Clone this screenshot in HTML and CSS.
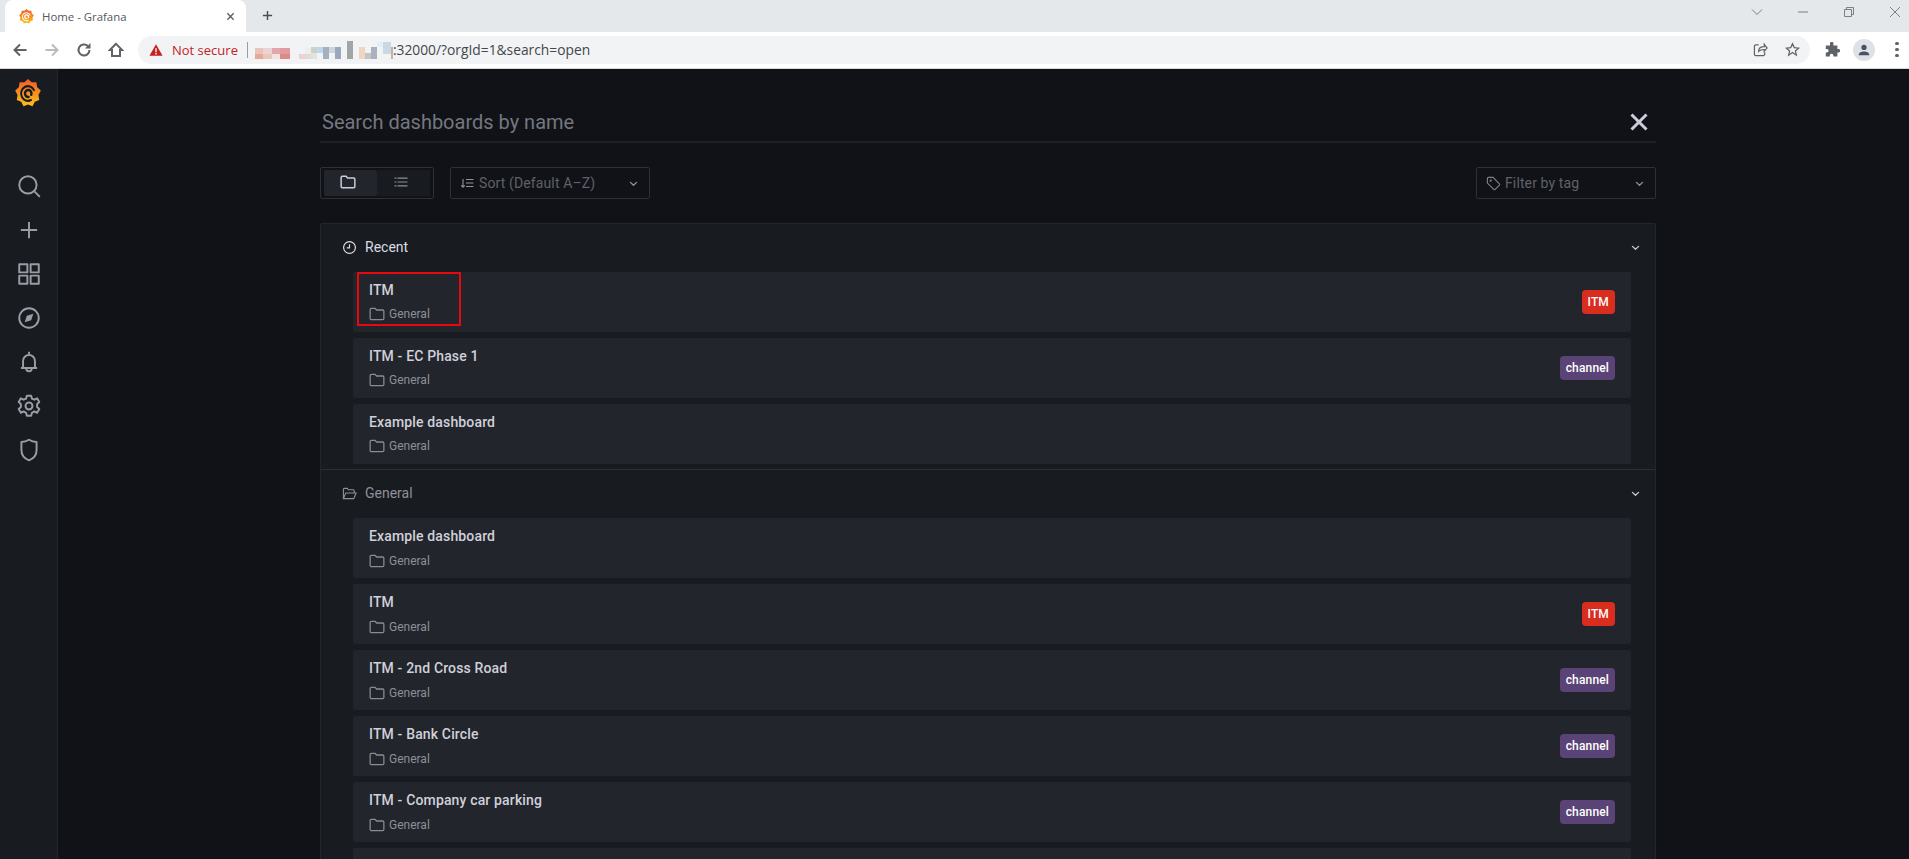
FILE: index.html
```html
<!DOCTYPE html>
<html lang="en">
<head>
<meta charset="utf-8">
<title>Home - Grafana</title>
<link rel="stylesheet" href="styles.css">
</head>
<body>
<svg class="defs" width="0" height="0" aria-hidden="true">
  <defs>
    <linearGradient id="gf" x1="0" y1="1" x2="0" y2="0">
      <stop offset="0" stop-color="#fcc21b"/>
      <stop offset="1" stop-color="#f05a28"/>
    </linearGradient>
    <symbol id="logo" viewBox="0 0 24 24" preserveAspectRatio="none">
      <path fill="url(#gf)" d="M12 0L15.350 2.790 19.710 2.810 20.490 7.100 23.820 9.920 21.650 13.700 22.390 18 18.300 19.510 16.100 23.280 12 21.800 7.900 23.280 5.700 19.510 1.610 18 2.350 13.700 .18 9.920 3.510 7.100 4.290 2.810 8.650 2.790z"/>
      <path fill="none" stroke="currentColor" stroke-width="1.800" stroke-linecap="round" d="M17.500 9.500A6.300 6.300 0 1 0 14.800 18"/>
      <path fill="none" stroke="currentColor" stroke-width="2.200" stroke-linecap="round" d="M15 13.500a3 3 0 1 0-2.500 1.900"/>
    </symbol>
    <symbol id="folder" viewBox="0 0 14 14">
      <path fill="none" stroke="currentColor" d="M1 3c0-.6.4-1 1-1h3.300l1.300 1.500H12c.6 0 1 .4 1 1v6.500c0 .6-.4 1-1 1H2c-.6 0-1-.4-1-1z"/>
    </symbol>
    <symbol id="chev" viewBox="0 0 10 6">
      <path fill="none" stroke="currentColor" stroke-width="1.500" stroke-linecap="round" stroke-linejoin="round" d="M1.600 1.200L5 4.400l3.400-3.200"/>
    </symbol>
  </defs>
</svg>

<header class="tabstrip">
  <div class="tab">
    <svg class="tab-logo"><use href="#logo"/></svg>
    <span class="tab-title">Home - Grafana</span>
    <svg class="tab-close" viewBox="0 0 10 10"><path d="M1.500 1.500l7 7m0-7l-7 7"/></svg>
  </div>
  <svg class="new-tab" viewBox="0 0 12 12"><path d="M6 1v10M1 6h10"/></svg>
  <div class="win-controls">
    <svg class="win-icon" viewBox="0 0 12 12"><path d="M1 3.500l5 5 5-5"/></svg>
    <svg class="win-icon" viewBox="0 0 12 12"><path d="M1 6h10"/></svg>
    <svg class="win-icon" viewBox="0 0 12 12"><path d="M1.500 3.500h7v7h-7zM3.500 3.500v-2h7v7h-2"/></svg>
    <svg class="win-icon" viewBox="0 0 12 12"><path d="M1 1l10 10M11 1L1 11"/></svg>
  </div>
</header>

<div class="toolbar">
  <svg class="nav-icon" viewBox="0 0 16 16"><path d="M14.500 8H3M8 2.500L2.500 8 8 13.500"/></svg>
  <svg class="nav-icon nav-off" viewBox="0 0 16 16"><path d="M1.500 8H13M8 2.500L13.500 8 8 13.500"/></svg>
  <svg class="nav-icon" viewBox="0 0 16 16"><path d="M13.500 8a5.500 5.500 0 1 1-1.700-4"/><path class="solid" d="M14.500 1v5.500H9z"/></svg>
  <svg class="nav-icon" viewBox="0 0 16 16"><path d="M8 1.800L1.800 8H4v6h8V8h2.200z"/></svg>
  <div class="omnibox">
    <svg class="warn" viewBox="0 0 16 16"><path d="M8 1.500L15.500 14.500H.5z"/><path class="warn-mark" d="M8 6v4.500M8 11.500v1.500"/></svg>
    <span class="not-secure">Not secure</span>
    <span class="sep"></span>
    <svg class="blur" viewBox="0 0 114 18" preserveAspectRatio="none" shape-rendering="crispEdges">
      <rect x="0" y="7" width="7" height="6" fill="#e8c4bc"/><rect x="0" y="13" width="7" height="5" fill="#e6a898"/>
      <rect x="7" y="7" width="7" height="6" fill="#ecd2d3"/><rect x="7" y="13" width="7" height="5" fill="#e8c8bc"/>
      <rect x="14" y="7" width="7" height="6" fill="#e2a5aa"/><rect x="14" y="13" width="7" height="5" fill="#f2e2e0"/><rect x="21" y="7" width="8" height="6" fill="#e09aa0"/><rect x="21" y="13" width="8" height="5" fill="#dc8a84"/>
      <rect x="36" y="13" width="5" height="5" fill="#ecd2d6"/><rect x="41" y="7" width="5" height="6" fill="#eeeeee"/><rect x="41" y="13" width="5" height="5" fill="#e5d8d6"/><rect x="46" y="6" width="5" height="6" fill="#c9d3c9"/><rect x="46" y="12" width="5" height="6" fill="#dfe5de"/><rect x="51" y="6" width="5" height="6" fill="#bcd7ef"/><rect x="56" y="6" width="5" height="12" fill="#a7afbd"/><rect x="61" y="6" width="5" height="6" fill="#ccd6e2"/><rect x="66" y="6" width="5" height="12" fill="#9aa7bc"/>
      <rect x="76" y="0" width="5" height="18" fill="#a2a5a6"/>
      <rect x="86" y="6" width="5" height="12" fill="#efd6bf"/><rect x="91" y="12" width="5" height="6" fill="#c4c4c8"/><rect x="96" y="6" width="5" height="12" fill="#a9b0c0"/><rect x="101" y="1" width="5" height="5" fill="#e6eef5"/><rect x="106" y="1" width="6" height="12" fill="#c9d8e6"/><rect x="112" y="6" width="2" height="12" fill="#c9b09a"/>
    </svg>
    <span class="url">:32000/?orgId=1&amp;search=open</span>
    <span class="omni-end">
      <svg class="omni-icon" viewBox="0 0 16 16"><path d="M6 3H3a1.500 1.500 0 0 0-1.500 1.500V13A1.500 1.500 0 0 0 3 14.500h8a1.500 1.500 0 0 0 1.500-1.500v-2"/><path d="M6 10c0-3 2.500-5 6-5V2.500L15 6.500l-3 3.500V8c-2.500 0-4.500.5-6 2z"/></svg>
      <svg class="omni-icon" viewBox="0 0 16 16"><path d="M8 1.800l1.900 4.200 4.600.5-3.400 3.100 1 4.500L8 11.300l-4.100 2.800 1-4.500L1.500 6.500l4.600-.5z"/></svg>
    </span>
  </div>
  <svg class="ext" viewBox="0 0 16 16"><path d="M6 1.500a1.700 1.700 0 0 1 3.400 0V3.500h4v3.400h1a1.800 1.800 0 0 1 0 3.600h-1v4h-4v-1a1.800 1.800 0 0 0-3.600 0v1h-4v-4h1a1.800 1.800 0 0 0 0-3.600h-1v-3.400H6z"/></svg>
  <div class="avatar"><svg viewBox="0 0 16 16"><circle cx="8" cy="5" r="3"/><path d="M2 13.500c0-2.500 3-3.800 6-3.800s6 1.300 6 3.800V14H2z"/></svg></div>
  <div class="kebab"><i></i><i></i><i></i></div>
</div>

<div class="app">
  <nav class="sidebar">
    <svg class="side-logo"><use href="#logo"/></svg>
    <ul class="side-list">
      <li><svg viewBox="0 0 24 24"><circle cx="11" cy="11" r="8"/><path d="M17 17l5 5"/></svg></li>
      <li><svg viewBox="0 0 24 24"><path d="M12 4.500v15M4.500 12h15"/></svg></li>
      <li><svg viewBox="0 0 24 24"><path d="M3 3h7.500v7.500H3zM13.500 3H21v7.500h-7.500zM3 13.500h7.500V21H3zM13.500 13.500H21V21h-7.500z"/></svg></li>
      <li><svg viewBox="0 0 24 24"><circle cx="12" cy="12" r="9"/><path class="side-fill" d="M16 8l-2 6-6 2 2-6z"/></svg></li>
      <li><svg viewBox="0 0 24 24"><path d="M12 2.500v2M6.500 17V11a5.500 5.500 0 0 1 11 0v6M4.500 17.500h15M9.500 18c0 3.500 5 3.500 5 0"/></svg></li>
      <li><svg viewBox="0 0 24 24"><circle cx="12" cy="12" r="3.200"/><path d="M10 2.500h4l.7 2.700 2.300 1 2.500-1.300 2 3.400-2 2 0 2.600 2 1.900-2 3.500-2.600-1.300-2.200 1.300-.7 2.700h-4l-.7-2.700-2.300-1.300-2.500 1.300-2-3.500 2-1.900v-2.600l-2-2 2-3.400 2.500 1.300 2.300-1z"/></svg></li>
      <li><svg viewBox="0 0 24 24"><path d="M12 2.500c2.300 1.500 4.600 2.100 7 2.200V12c0 4.800-3 8-7 9.500-4-1.500-7-4.700-7-9.500V4.700c2.400-.1 4.700-.7 7-2.200z"/></svg></li>
    </ul>
  </nav>

  <main class="main">
    <div class="search-row">
      <span class="search-placeholder">Search dashboards by name</span>
      <svg class="search-close" viewBox="0 0 20 20"><path d="M2.500 2.500l15 15M17.500 2.500l-15 15"/></svg>
    </div>

    <div class="filters">
      <div class="toggle">
        <span class="toggle-btn is-active"><svg class="toggle-icon"><use href="#folder"/></svg></span>
        <span class="toggle-btn"><svg class="list-icon" viewBox="0 0 14 14"><path d="M.5 3.200h2M3.500 3.200h10M.5 7h2M3.500 7h10M.5 10.800h2M3.500 10.800h10"/></svg></span>
      </div>
      <div class="select select-sort">
        <svg class="sort-icon" viewBox="0 0 14 14"><path d="M3 3v8M1.200 9.300L3 11.200l1.800-1.900M6 3.500h7.500M6 7h7.500M6 10.500h7.500"/></svg>
        <span>Sort (Default A–Z)</span>
        <svg class="select-chev"><use href="#chev"/></svg>
      </div>
      <div class="select select-tag">
        <svg class="tag-icon" viewBox="0 0 16 16"><path d="M1.500 2.500a1 1 0 0 1 1-1h5l6.800 6.800a1 1 0 0 1 0 1.400l-4.600 4.600a1 1 0 0 1-1.400 0L1.500 7.500z"/><circle cx="5" cy="5" r=".6"/></svg>
        <span>Filter by tag</span>
        <svg class="select-chev"><use href="#chev"/></svg>
      </div>
    </div>

    <section class="panel">
      <div class="section">
        <h2 class="section-head head-recent">
          <svg class="head-icon" viewBox="0 0 16 16"><circle cx="8" cy="8" r="6.300"/><path d="M8 4.500V8.500H5"/></svg>
          <span>Recent</span>
          <svg class="head-chev"><use href="#chev"/></svg>
        </h2>
        <ul class="rows">
          <li class="row">
            <div class="row-text">
              <b class="row-title">ITM</b>
              <span class="row-folder"><svg class="row-icon"><use href="#folder"/></svg>General</span>
            </div>
            <span class="badge badge-red">ITM</span>
            <span class="highlight"></span>
          </li>
          <li class="row">
            <div class="row-text">
              <b class="row-title">ITM - EC Phase 1</b>
              <span class="row-folder"><svg class="row-icon"><use href="#folder"/></svg>General</span>
            </div>
            <span class="badge badge-purple">channel</span>
          </li>
          <li class="row">
            <div class="row-text">
              <b class="row-title">Example dashboard</b>
              <span class="row-folder"><svg class="row-icon"><use href="#folder"/></svg>General</span>
            </div>
          </li>
        </ul>
      </div>
      <div class="section section-next">
        <h2 class="section-head head-general">
          <svg class="head-icon" viewBox="0 0 16 16"><path d="M1.500 13V3.500a1 1 0 0 1 1-1h3l1.300 1.500H12a1 1 0 0 1 1 1V7M1.500 13.500L4 7.500h11l-2.500 6z"/></svg>
          <span>General</span>
          <svg class="head-chev"><use href="#chev"/></svg>
        </h2>
        <ul class="rows rows-general">
          <li class="row">
            <div class="row-text">
              <b class="row-title">Example dashboard</b>
              <span class="row-folder"><svg class="row-icon"><use href="#folder"/></svg>General</span>
            </div>
          </li>
          <li class="row">
            <div class="row-text">
              <b class="row-title">ITM</b>
              <span class="row-folder"><svg class="row-icon"><use href="#folder"/></svg>General</span>
            </div>
            <span class="badge badge-red">ITM</span>
          </li>
          <li class="row">
            <div class="row-text">
              <b class="row-title">ITM - 2nd Cross Road</b>
              <span class="row-folder"><svg class="row-icon"><use href="#folder"/></svg>General</span>
            </div>
            <span class="badge badge-purple">channel</span>
          </li>
          <li class="row">
            <div class="row-text">
              <b class="row-title">ITM - Bank Circle</b>
              <span class="row-folder"><svg class="row-icon"><use href="#folder"/></svg>General</span>
            </div>
            <span class="badge badge-purple">channel</span>
          </li>
          <li class="row">
            <div class="row-text">
              <b class="row-title">ITM - Company car parking</b>
              <span class="row-folder"><svg class="row-icon"><use href="#folder"/></svg>General</span>
            </div>
            <span class="badge badge-purple">channel</span>
          </li>
          <li class="row"></li>
        </ul>
      </div>
    </section>
  </main>
</div>
</body>
</html>
```
FILE: styles.css
```css
* { box-sizing: border-box; }
html, body { margin: 0; height: 100%; overflow: hidden; }
body { display: flex; flex-direction: column; font-family: Roboto, "Liberation Sans", sans-serif; background: #111217; }
.defs { position: absolute; }
ul { list-style: none; margin: 0; padding: 0; }

/* browser chrome */
.tabstrip { height: 32px; flex: none; display: flex; align-items: flex-start; background: #e4e8eb; }
.tab { margin-left: 5px; width: 241px; height: 32px; flex: none; background: #fff; border-radius: 8px 8px 0 0; display: flex; align-items: center; padding: 0 11px 0 14px; color: #fff; }
.tab-logo { width: 15px; height: 15px; flex: none; }
.tab-title { margin-left: 8px; font: 11.400px "Open Sans", "Liberation Sans", sans-serif; color: #55585c; flex: 1; }
.tab-close { width: 9px; height: 9px; fill: none; stroke: #5f6368; stroke-width: 1.600; }
.new-tab { width: 11px; height: 11px; margin: 10px 0 0 16px; fill: none; stroke: #4a4d51; stroke-width: 1.600; flex: none; }
.win-controls { margin-left: auto; display: flex; gap: 34px; padding: 6px 8px 0 0; }
.win-icon { width: 12px; height: 12px; fill: none; stroke: #6f7377; stroke-width: .9; }

.toolbar { height: 37px; flex: none; display: flex; align-items: center; background: #fff; border-bottom: 1px solid #d5d7d9; padding: 0 0 1px 12px; }
.nav-icon { width: 16px; height: 16px; fill: none; stroke: #5f6368; stroke-width: 2; margin-right: 16px; flex: none; }
.nav-off { stroke: #b9bbbe; }
.solid { fill: #5f6368; stroke: none; }
.omnibox { margin-left: -2px; width: 1672px; height: 28px; border-radius: 14px; background: #f1f3f4; display: flex; align-items: center; padding-left: 11px; flex: none; }
.warn { width: 14px; height: 14px; flex: none; fill: #c5221f; }
.warn-mark { stroke: #fff; stroke-width: 1.500; fill: none; }
.not-secure { margin-left: 9px; font: 13px "Open Sans", "Liberation Sans", sans-serif; color: #c5221f; }
.sep { width: 1px; height: 16px; background: #9a9da0; margin: 0 7px 0 9px; flex: none; }
.blur { width: 138px; height: 18px; flex: none; }
.url { font: 13.800px "Open Sans", "Liberation Sans", sans-serif; color: #44474b; }
.omni-end { margin-left: auto; display: flex; gap: 17px; padding-right: 10px; }
.omni-icon { width: 15px; height: 15px; fill: none; stroke: #5f6368; stroke-width: 1.300; }
.ext { width: 16px; height: 16px; margin-left: 14px; fill: #5f6368; flex: none; }
.avatar { width: 22px; height: 22px; margin-left: 13px; border-radius: 50%; background: #dee1e6; display: flex; align-items: center; justify-content: center; flex: none; }
.avatar svg { width: 14px; height: 14px; fill: #4b5262; }
.kebab { margin-left: 20px; display: flex; flex-direction: column; gap: 2.500px; flex: none; }
.kebab i { width: 3.500px; height: 3.500px; border-radius: 50%; background: #5f6368; }

/* app */
.app { flex: 1; display: flex; min-height: 0; }
.sidebar { width: 58px; flex: none; background: #181b1f; border-right: 1px solid #23262b; color: #181b1f; }
.side-logo { display: block; width: 26px; height: 28px; margin: 10px 0 0 15px; }
.side-list { margin-top: 57px; }
.side-list li { height: 44px; display: flex; align-items: center; justify-content: center; }
.side-list svg { width: 26px; height: 26px; fill: none; stroke: #9a9da6; stroke-width: 1.800; stroke-linejoin: round; }
.side-list .side-fill { fill: #9a9da6; stroke: none; }

.main { flex: 1; min-width: 0; padding-left: 262px; }
.search-row { width: 1336px; height: 74px; border-bottom: 2px solid #1d2025; display: flex; align-items: center; justify-content: space-between; padding: 34px 7px 0 2px; }
.search-placeholder { font-size: 20px; color: #74777f; }
.search-close { width: 20px; height: 20px; fill: none; stroke: #ccccdc; stroke-width: 3; }

.filters { width: 1336px; display: flex; margin-top: 24px; gap: 16px; }
.toggle { width: 114px; height: 32px; border: 1px solid #2d3035; border-radius: 2px; padding: 2px 3px; display: flex; }
.toggle-btn { flex: 1; display: flex; align-items: center; justify-content: center; background: #181b1f; padding: 0 5px 2px 0; }
.toggle-btn.is-active { background: #22252b; border-radius: 2px; }
.toggle-icon { width: 16px; height: 16px; color: #ccccdc; stroke-width: 1.300; }
.list-icon { fill: none; stroke: #8e9099; stroke-width: 1.200; width: 14px; height: 14px; }
.select { height: 32px; border: 1px solid #2d3035; border-radius: 2px; display: flex; align-items: center; font-size: 14px; letter-spacing: .12px; color: #5e6169; }
.select-sort { width: 200px; padding: 0 11px 0 9px; }
.select-tag { width: 180px; margin-left: auto; padding: 0 11px 0 9px; }
.sort-icon { width: 14px; height: 14px; margin-right: 5px; fill: none; stroke: #8e9099; stroke-width: 1.100; }
.tag-icon { width: 15px; height: 15px; margin-right: 4px; fill: none; stroke: #7e8088; stroke-width: 1.200; }
.select-chev { width: 9px; height: 6px; margin: 2px 0 0 auto; color: #8e9099; }

.panel { width: 1336px; margin-top: 24px; background: #181b1f; border: 1px solid #23262b; border-bottom: 0; border-radius: 2px 2px 0 0; }
.section { padding-bottom: 5px; }
.section-next { border-top: 1px solid #2c2f34; }
.section-head { margin: 0; height: 48px; display: flex; align-items: center; font-size: 14px; font-weight: 400; padding: 0 15px 2px 21px; }
.head-recent { color: #dcdce4; }
.head-general { color: #8e9099; }
.head-icon { width: 15px; height: 15px; margin-right: 8px; fill: none; stroke: currentColor; stroke-width: 1.200; }
.head-recent .head-icon { stroke-width: 1.300; }
.head-chev { width: 9px; height: 6px; margin: 2px 0 0 auto; color: #c8c8d4; }
.rows { display: flex; flex-direction: column; gap: 6px; padding: 0 24px 0 32px; }
.row { position: relative; height: 60px; background: #22252b; border-radius: 2px; display: flex; align-items: center; justify-content: space-between; padding: 0 16px; }
.row-text { display: flex; flex-direction: column; padding-bottom: 2px; }
.row-title { font-size: 14px; line-height: 18px; font-weight: 500; letter-spacing: .15px; color: #d0d0dc; }
.row-folder { display: flex; align-items: center; margin-top: 7px; font-size: 12px; line-height: 16px; color: #8e9099; }
.rows-general .row-text { padding-bottom: 1px; }
.rows-general .row-folder { margin-top: 8px; }
.row-icon { width: 16px; height: 16px; margin-right: 4px; color: #8a8c94; stroke-width: 1.100; }
.badge { height: 24px; border-radius: 4px; display: flex; align-items: center; padding: 0 6px; font-size: 12px; font-weight: 500; letter-spacing: .15px; color: #fff; }
.badge-red { background: #d92d20; }
.badge-purple { background: #5a4477; }
.highlight { position: absolute; left: 4px; top: 0; width: 104px; height: 54px; border: 2px solid #e8090f; }
```
